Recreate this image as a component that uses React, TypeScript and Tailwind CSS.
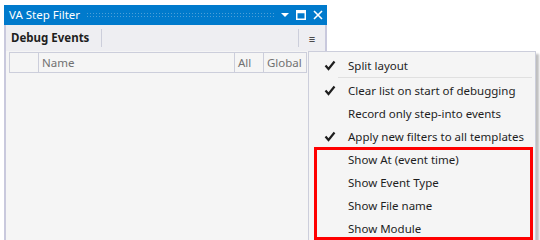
const Check = () => (
  <svg width="12" height="11" viewBox="0 0 12 11" className="block">
    <path d="M1.5 5.5 L4.5 9 L10.5 1.5" fill="none" stroke="#1e1e1e" strokeWidth="2.2" />
  </svg>
);

const MenuItem = ({ label, checked }: { label: string; checked?: boolean }) => (
  <div className="flex items-center h-[23px]">
    <div className="w-[39px] flex justify-center pl-[2px]">{checked && <Check />}</div>
    <span className="text-[11.5px] text-[#1e1e1e]">{label}</span>
  </div>
);

const App = () => {
  return (
    <div
      className="relative w-[540px] h-[240px] bg-white overflow-hidden"
      style={{ fontFamily: '"Noto Sans", "Open Sans", sans-serif' }}
    >
      <div className="pt-[5px] pl-[4px]">
        <div className="w-[323px] h-[235px] flex flex-col border-x-2 border-[#c9c9dd] bg-[#f5f5f5]">
          {/* title bar */}
          <div className="h-[20px] bg-[#007acc] flex items-center pr-[4px] -mx-[2px] pl-[5px]">
            <span className="text-white text-[11.5px] leading-none">VA Step Filter</span>
            <div className="flex-1 mx-[6px] h-[6px] bg-[radial-gradient(#4d9fd8_0.8px,transparent_0.9px)] bg-[length:3px_3px]" />
            <svg width="10" height="6" viewBox="0 0 10 6" className="mr-[6px]">
              <path d="M1 1 L9 1 L5 5 Z" fill="white" />
            </svg>
            <svg width="10" height="10" viewBox="0 0 10 10" className="mr-[7px]">
              <rect x="0.75" y="0.75" width="8.5" height="8.5" fill="none" stroke="white" strokeWidth="1.5" />
              <rect x="0.75" y="0.75" width="8.5" height="2.5" fill="white" />
            </svg>
            <svg width="10" height="10" viewBox="0 0 10 10">
              <path d="M1 1 L9 9 M9 1 L1 9" stroke="white" strokeWidth="1.6" />
            </svg>
          </div>
          {/* toolbar */}
          <div className="h-[26px] bg-[#eeeef2] flex items-center">
            <span className="pl-[5px] pr-[12px] text-[11.5px] font-bold text-[#1e1e1e]">Debug Events</span>
            <div className="w-px h-[18px] bg-[#cccedb]" />
            <div className="flex-1" />
            <div className="w-px h-[18px] bg-[#cccedb]" />
            <span className="w-[26px] text-center text-[11px] font-bold text-[#1e1e1e] leading-none">≡</span>
          </div>
          {/* header */}
          <div className="ml-[3px] mr-[18px] h-[21px] mt-[1px] flex border-y border-l border-[#cccedb] bg-[#f5f5f5] text-[11.5px] text-[#717171]">
            <div className="w-[29px] border-r border-[#cccedb]" />
            <div className="flex-1 pl-[3px] border-r border-[#cccedb] leading-[19px]">Name</div>
            <div className="w-[29px] pl-[3px] border-r border-[#cccedb] leading-[19px]">All</div>
            <div className="w-[43px] pl-[3px] border-r border-[#cccedb] leading-[19px]">Global</div>
          </div>
          <div className="flex-1" />
        </div>
      </div>

      {/* context menu */}
      <div className="absolute left-[308px] top-[51px] w-[228px] h-[200px] bg-[#f5f5f5] border border-[#cccedb] shadow-[3px_3px_2px_rgba(0,0,0,0.25)] pt-[2px]">
        <MenuItem label="Split layout" checked />
        <div className="ml-[29px] mr-[3px] h-[2px] border-t border-[#e0e0e0]" />
        <MenuItem label="Clear list on start of debugging" checked />
        <MenuItem label="Record only step-into events" />
        <MenuItem label="Apply new filters to all templates" checked />
        <MenuItem label="Show At (event time)" />
        <MenuItem label="Show Event Type" />
        <MenuItem label="Show File name" />
        <MenuItem label="Show Module" />
      </div>

      {/* highlight annotation */}
      <div className="absolute left-[314px] top-[147px] w-[219px] h-[93px] border-[3px] border-[#ff0000]" />
    </div>
  );
};

export default App;
